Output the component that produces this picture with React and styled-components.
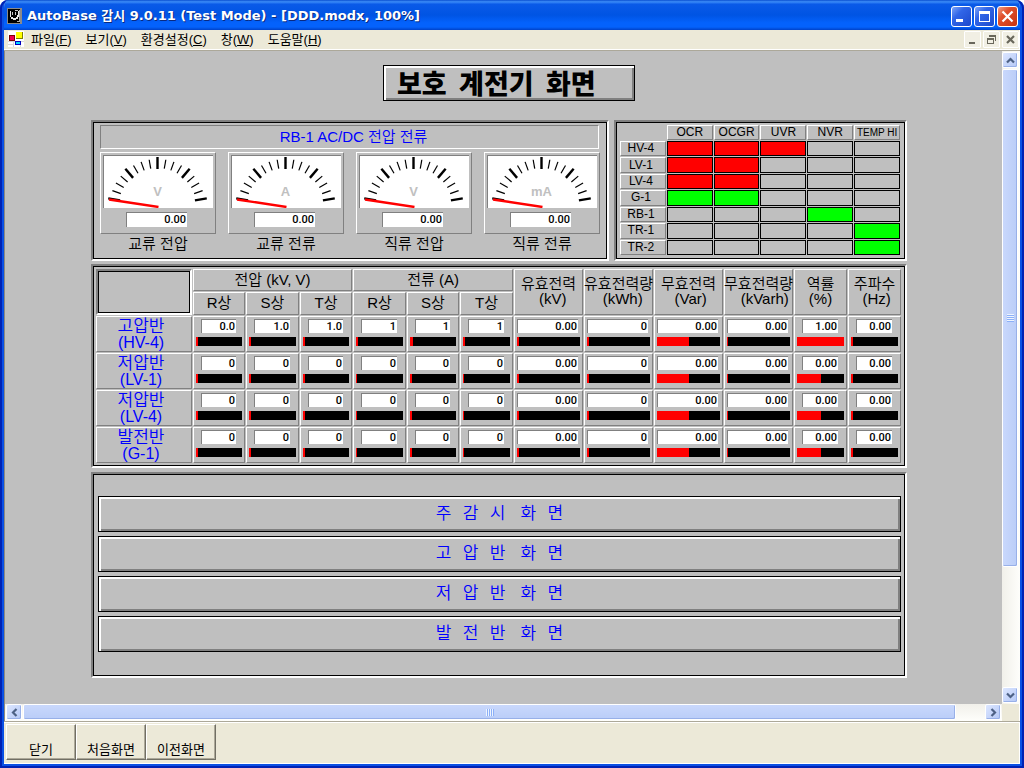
// App.jsx - relay protection monitoring screen inside its desktop window
import styled, { createGlobalStyle, css } from 'styled-components';

const GlobalStyle = createGlobalStyle`
  *, *::before, *::after {
    box-sizing: border-box;
  }

  body {
    margin: 0;
    background: #fff;
    color: #000;
    font-family: 'Liberation Sans', 'Noto Sans CJK KR', sans-serif;
    font-size: 13px;
  }

  button {
    margin: 0;
    padding: 0;
    font: inherit;
    color: inherit;
  }
`;

// Shared bevels
const raised = css`
  border: 1px solid;
  border-color: #fff #808080 #808080 #fff;
`;

const sunken = css`
  border: 1px solid;
  border-color: #808080 #fff #fff #808080;
`;

const groove = css`
  border: 2px solid;
  border-color: #808080 #fff #fff #808080;
  box-shadow: inset 0 0 0 1px #000;
`;

const plate = css`
  border: 1px solid #000;
  background: #bfbfbf;
  box-shadow: inset 2px 2px #fff, inset -2px -2px #808080;
`;

// Window frame
const Window = styled.div`
  display: flex;
  flex-direction: column;
  min-height: 100vh;
  background: #ece9d8;
  border: solid #0a50e4;
  border-width: 0 4px 4px;
  border-radius: 8px 8px 0 0;
  box-shadow: inset 0 -1px #fff, inset -1px 0 #fff;
  outline: 2px solid #0022b4;
  outline-offset: -2px;
  overflow: hidden;
`;

const TitleBar = styled.header`
  display: flex;
  align-items: center;
  gap: 5px;
  height: 30px;
  margin: 0 -4px;
  padding: 2px 6px 0 7px;
  position: relative;
  background: linear-gradient(#0a4fd0 0%, #3c8cf8 6%, #0a5ae8 14%, #0054e3 50%, #0462fc 76%, #0462fc 90%, #0042c8 100%);
`;

const WindowTitle = styled.h1`
  flex: 1;
  margin: 0;
  color: #fff;
  font-family: 'DejaVu Sans', 'Noto Sans CJK KR', sans-serif;
  font-size: 13px;
  font-weight: 700;
  line-height: 20px;
  white-space: nowrap;
  text-shadow: 1px 1px #0a2a80;
`;

const WindowButtons = styled.div`
  display: flex;
  gap: 2px;
`;

const WindowButton = styled.button`
  display: grid;
  place-items: center;
  width: 21px;
  height: 21px;
  border: 1px solid #fff;
  border-radius: 3px;
  background: ${({ $close }) =>
    $close
      ? 'linear-gradient(135deg, #f0a088, #e0502c 35%, #c83410)'
      : 'linear-gradient(135deg, #7ea4f8, #3166e8 35%, #1c48cc)'};
`;

const MenuBar = styled.nav`
  display: flex;
  align-items: center;
  height: 21px;
  padding: 0 0 2px 4px;
  border-bottom: 1px solid #aca899;
  box-shadow: inset 0 -1px #fff;
`;

const MenuList = styled.div`
  display: flex;
  flex: 1;
  gap: 14px;
  margin-left: 7px;
`;

const MenuItem = styled.button`
  padding-top: 1px;
  border: 0;
  background: none;
  font-size: 13px;
  line-height: 18px;
  white-space: nowrap;
`;

const MdiButtons = styled.div`
  display: flex;
  gap: 2px;
  padding-right: 1px;
`;

const MdiButton = styled.button`
  display: grid;
  place-items: center;
  width: 17px;
  height: 17px;
  border: 1px solid #fff;
  border-radius: 1px;
  background: #f1efe4;
`;

const Workspace = styled.div`
  display: grid;
  grid-template-columns: minmax(0, 1fr) 18px;
  grid-template-rows: 1fr 17px;
  flex: 1;
  border-left: 1px solid #8c8a80;
`;

const Canvas = styled.main`
  display: flex;
  flex-direction: column;
  gap: 3px;
  padding: 14px 95px 26px 86px;
  background: #bfbfbf;
`;

// Scroll bars
const ScrollBar = styled.div`
  display: flex;
  flex-direction: ${({ $vertical }) => ($vertical ? 'column' : 'row')};
  gap: 1px;
  padding: ${({ $vertical }) => ($vertical ? '1px 2px 1px 0' : '0 1px 1px')};
  background: linear-gradient(${({ $vertical }) => ($vertical ? '90deg' : '180deg')}, #f1f0ea, #fefefb);
`;

const scrollPart = css`
  border: 1px solid #fff;
  border-radius: 2px;
  box-shadow: inset -1px -1px #98b0e8;
`;

const ScrollButton = styled.button`
  ${scrollPart}
  display: grid;
  place-items: center;
  width: 16px;
  height: 16px;
  flex: none;
  background: linear-gradient(135deg, #dce6ff, #b4c8f6);
`;

const ScrollThumb = styled.div`
  ${scrollPart}
  display: grid;
  place-items: center;
  flex: ${({ $share }) => $share} 1 0;
  background: linear-gradient(${({ $vertical }) => ($vertical ? '90deg' : '180deg')}, #c9d8fc, #bacdf8);
`;

const ScrollRest = styled.div`
  flex: ${({ $share }) => $share} 1 0;
`;

const Grip = styled.div`
  width: ${({ $vertical }) => ($vertical ? '7px' : '8px')};
  height: ${({ $vertical }) => ($vertical ? '8px' : '7px')};
  background: repeating-linear-gradient(
    ${({ $vertical }) => ($vertical ? '180deg' : '90deg')},
    #eef4fe 0 1px,
    #8cb0f8 1px 2px
  );
`;

// Screen heading
const HeadingRow = styled.div`
  display: flex;
  justify-content: center;
  padding: 0 0 16px 20px;
`;

const Heading = styled.h2`
  ${plate}
  width: 252px;
  height: 36px;
  margin: 0;
  padding-left: 13px;
  font-family: 'Noto Sans CJK KR', sans-serif;
  font-size: 27px;
  font-weight: 900;
  line-height: 33px;
  white-space: pre;
`;

const TopRow = styled.div`
  display: grid;
  grid-template-columns: minmax(0, 518fr) minmax(0, 293fr);
  gap: 5px;
`;

// Meters
const MeterPanel = styled.section`
  ${groove}
  padding: 3px 8px 0 7px;
  min-height: 141px;
`;

const PanelCaption = styled.h3`
  ${sunken}
  height: 24px;
  margin: 0 0 3px;
  padding-left: 8px;
  color: #00f;
  font-size: 15px;
  font-weight: 350;
  line-height: 22px;
  text-align: center;
`;

const MeterRow = styled.div`
  display: grid;
  grid-template-columns: repeat(4, 1fr);
  gap: 12px;
`;

const Meter = styled.figure`
  margin: 0;
`;

const MeterBody = styled.div`
  ${raised}
  display: flex;
  flex-direction: column;
  gap: 4px;
  height: 82px;
  padding: 2px;
`;

const Dial = styled.div`
  height: 53px;
  border: solid #808080;
  border-width: 1px 0 0 1px;
  background: #fff;

  svg {
    display: block;
  }
`;

const MeterName = styled.figcaption`
  padding-top: 1px;
  font-size: 15px;
  font-weight: 350;
  line-height: 18px;
  text-align: center;
`;

const Reading = styled.output`
  display: block;
  height: ${({ $tall }) => ($tall ? '15px' : '14px')};
  margin: ${({ $inset }) => $inset};
  padding-right: 1px;
  border: solid #808080;
  border-width: 1px 0 0 1px;
  background: #fff;
  font-family: Roboto, 'Liberation Sans', sans-serif;
  font-size: 11px;
  font-weight: 500;
  line-height: 13px;
  text-align: right;
`;

// Relay states
const RelayPanel = styled.section`
  ${groove}
  padding: 2px 4px 0 3px;
`;

const RelayTable = styled.table`
  width: 100%;
  height: 132px;
  table-layout: fixed;
  border-collapse: separate;
  border-spacing: 1px;

  th {
    ${raised}
    height: 15px;
    padding: 0 4px 0 0;
    font-size: 12px;
    font-weight: 350;
    line-height: 13px;
    white-space: nowrap;
  }

  thead th {
    padding: 0;
  }
`;

const SmallLabel = styled.span`
  font-size: 10px;
`;

const relayColors = { alarm: '#f00', ok: '#0f0', off: 'transparent' };

const RelayCell = styled.td`
  height: 15px;
  padding: 0;
  border: 1px solid #000;
  background: ${({ $state }) => relayColors[$state]};
`;

// Feeder measurements
const FeederPanel = styled.section`
  ${groove}
  padding: 2px 3px 2px 2px;
`;

const FeederTable = styled.table`
  width: 100%;
  table-layout: fixed;
  border-collapse: separate;
  border-spacing: 1px;
`;

const HeadCell = styled.th`
  ${raised}
  height: ${({ $low }) => ($low ? '23px' : '22px')};
  padding: 0 0 2px;
  font-size: 15px;
  font-weight: 350;
  line-height: 15px;
  white-space: pre;

  span {
    display: flex;
    justify-content: center;
  }
`;

const CornerCell = styled.th`
  ${groove}
  padding: 0;
`;

const FeederName = styled.th`
  ${raised}
  padding: 2px 6px 0 0;
  color: #00f;
  font-size: 17px;
  font-weight: 350;
  line-height: 16px;
`;

const FeederCode = styled.span`
  display: block;
  font-size: 16px;
`;

const ValueCell = styled.td`
  ${raised}
  height: 35px;
  padding: 2px 2px 5px;
`;

const Bar = styled.div`
  height: 9px;
  margin-top: 4px;
  background: #000;
`;

const BarFill = styled.div`
  height: 100%;
  background: #f00;
`;

// Screen links
const ScreenPanel = styled.nav`
  ${groove}
  display: flex;
  flex-direction: column;
  gap: 4px;
  min-height: 206px;
  padding: 22px 4px 22px 5px;
  margin-top: 1px;
`;

const ScreenButton = styled.button`
  ${plate}
  height: 36px;
  padding-bottom: 5px;
  color: #00f;
  font-family: 'Noto Sans CJK KR', sans-serif;
  font-size: 17px;
  font-weight: 350;
  white-space: pre;
`;

// Bottom tool bar
const ToolBar = styled.footer`
  display: flex;
  height: 43px;
  padding: 2px 0 0 2px;
  border-top: 1px solid #aca899;
  box-shadow: inset 0 1px #fff;
`;

const ToolButton = styled.button`
  width: 70px;
  height: 36px;
  padding-top: 16px;
  border: 1px solid;
  border-color: #fff #716f64 #716f64 #fff;
  background: #ece9d8;
  box-shadow: inset -1px -1px #aca899;
  font-size: 13px;
  line-height: 16px;
`;

const menus = [
  ['파일', 'F'],
  ['보기', 'V'],
  ['환경설정', 'C'],
  ['창', 'W'],
  ['도움말', 'H'],
];

const meters = [
  { name: '교류 전압', unit: 'V' },
  { name: '교류 전류', unit: 'A' },
  { name: '직류 전압', unit: 'V' },
  { name: '직류 전류', unit: 'mA' },
];

const relayColumns = ['OCR', 'OCGR', 'UVR', 'NVR', 'TEMP HI'];

const relays = [
  { name: 'HV-4', states: ['alarm', 'alarm', 'alarm', 'off', 'off'] },
  { name: 'LV-1', states: ['alarm', 'alarm', 'off', 'off', 'off'] },
  { name: 'LV-4', states: ['alarm', 'alarm', 'off', 'off', 'off'] },
  { name: 'G-1', states: ['ok', 'ok', 'off', 'off', 'off'] },
  { name: 'RB-1', states: ['off', 'off', 'off', 'ok', 'off'] },
  { name: 'TR-1', states: ['off', 'off', 'off', 'off', 'ok'] },
  { name: 'TR-2', states: ['off', 'off', 'off', 'off', 'ok'] },
];

const columnWidths = [96, 52, 53, 52, 53, 52, 53, 69, 69, 69, 69, 53, 53];

const quantities = [
  ['유효전력', '  (kV)'],
  ['유효전력량', '  (kWh)'],
  ['무효전력', ' (Var)'],
  ['무효전력량', '   (kVarh)'],
  ['역률', '(%)'],
  ['주파수', ' (Hz)'],
];

const idleValues = ['0', '0', '0', '0', '0', '0', '0.00', '0', '0.00', '0.00', '0.00', '0.00'];
const idleLevels = [4, 4, 4, 2, 4, 2, 3, 3, 51, 1, 50, 4];

const feeders = [
  {
    name: '고압반',
    code: '(HV-4)',
    values: ['0.0', '1.0', '1.0', '1', '1', '1', '0.00', '0', '0.00', '0.00', '1.00', '0.00'],
    levels: [4, 4, 4, 4, 7, 4, 3, 3, 51, 1, 100, 4],
  },
  { name: '저압반', code: '(LV-1)', values: idleValues, levels: idleLevels },
  { name: '저압반', code: '(LV-4)', values: idleValues, levels: idleLevels },
  { name: '발전반', code: '(G-1)', values: idleValues, levels: idleLevels },
];

const screens = [
  '주   감   시    화   면',
  '고   압   반    화   면',
  '저   압   반    화   면',
  '발   전   반    화   면',
];

const tools = ['닫기', '처음화면', '이전화면'];

const tickAngles = Array.from({ length: 17 }, (_, i) => -80 + i * 10);

function DialFace({ unit }) {
  return (
    <svg width="109" height="52" viewBox="0 0 109 52" aria-hidden="true">
      {tickAngles.map((angle) => {
        const major = angle % 40 === 0;
        return (
          <line
            key={angle}
            x1="53.5"
            x2="53.5"
            y1={major ? 1 : 3}
            y2={major ? 13 : 12}
            stroke="#000"
            strokeWidth={major ? 2.4 : 1.2}
            transform={`rotate(${angle} 53.5 51)`}
          />
        );
      })}
      <text
        x="53.5"
        y="40"
        textAnchor="middle"
        fill="#c0c0c0"
        fontFamily="'Liberation Sans', Arial, sans-serif"
        fontSize="13"
        fontWeight="700"
      >
        {unit}
      </text>
      <line x1="54.5" y1="51" x2="5" y2="43.5" stroke="#f00" strokeWidth="2.4" />
    </svg>
  );
}

function Chevron({ turn = 0 }) {
  return (
    <svg width="9" height="9" viewBox="0 0 9 9" aria-hidden="true">
      <path d="M1 6.5 4.5 3 8 6.5" fill="none" stroke="#4d6185" strokeWidth="2.2" transform={`rotate(${turn} 4.5 4.5)`} />
    </svg>
  );
}

function AppIcon() {
  return (
    <svg width="15" height="16" viewBox="0 0 15 16" aria-hidden="true">
      <rect width="15" height="16" fill="#8a8a8a" />
      <rect x="1" y="1" width="12" height="14" fill="#000" />
      <path d="M2 3h1v6h1v2h2v1h3v-1h2V9h1V3h-1v4h-1v2H9v1H6V9H4V3z" fill="#e8e8e8" />
      <path d="M5 4h1v3H5zM8 2h3v1H8zM8 4h1v3H8z" fill="#c8c8c8" />
      <path d="M12 2h1v12h-3v-1h2z" fill="#b0b0b0" />
    </svg>
  );
}

function DocumentIcon() {
  return (
    <svg width="16" height="16" viewBox="0 0 16 16" aria-hidden="true">
      <rect width="16" height="16" fill="#fff" />
      <path d="M0 10.5h16M5.5 10v6M0 13.5h5M12.5 10v6" stroke="#d8d8d8" />
      <rect x="1" y="4" width="6" height="6" fill="#800000" />
      <rect x="2" y="5" width="4" height="4" fill="#f00050" />
      <rect x="8" y="1" width="7" height="7" fill="#808000" />
      <rect x="8" y="1" width="6" height="6" fill="#ff0" />
      <rect x="7" y="10" width="6" height="4" fill="#0000c0" />
      <rect x="8" y="11" width="4" height="2" fill="#00d8ff" />
    </svg>
  );
}

function TitleArea() {
  return (
    <TitleBar>
      <AppIcon />
      <WindowTitle>AutoBase 감시 9.0.11 (Test Mode) - [DDD.modx, 100%]</WindowTitle>
      <WindowButtons>
        <WindowButton type="button" aria-label="최소화">
          <svg width="13" height="13" viewBox="0 0 13 13">
            <path d="M1 9h7v3H1z" fill="#fff" />
          </svg>
        </WindowButton>
        <WindowButton type="button" aria-label="최대화">
          <svg width="13" height="13" viewBox="0 0 13 13">
            <path d="M1 1h11v11H1zM2 4v7h9V4z" fill="#fff" fillRule="evenodd" />
          </svg>
        </WindowButton>
        <WindowButton type="button" aria-label="닫기" $close>
          <svg width="13" height="13" viewBox="0 0 13 13">
            <path d="m1.5 1.5 10 10m0-10-10 10" stroke="#fff" strokeWidth="2.2" />
          </svg>
        </WindowButton>
      </WindowButtons>
    </TitleBar>
  );
}

function Menus() {
  return (
    <MenuBar>
      <DocumentIcon />
      <MenuList>
        {menus.map(([label, key]) => (
          <MenuItem key={key} type="button">
            {label}(<u>{key}</u>)
          </MenuItem>
        ))}
      </MenuList>
      <MdiButtons>
        <MdiButton type="button" aria-label="창 최소화">
          <svg width="11" height="11" viewBox="0 0 11 11">
            <path d="M2 8h6v2H2z" fill="#69675c" />
          </svg>
        </MdiButton>
        <MdiButton type="button" aria-label="창 복원">
          <svg width="11" height="11" viewBox="0 0 11 11">
            <path d="M3 1h7v6H9V3H3zM1 4h7v6H1zM2 6v3h5V6z" fill="#69675c" fillRule="evenodd" />
          </svg>
        </MdiButton>
        <MdiButton type="button" aria-label="창 닫기">
          <svg width="11" height="11" viewBox="0 0 11 11">
            <path d="m2 2 7 7m0-7-7 7" stroke="#69675c" strokeWidth="2.2" />
          </svg>
        </MdiButton>
      </MdiButtons>
    </MenuBar>
  );
}

function Meters() {
  return (
    <MeterPanel>
      <PanelCaption>RB-1 AC/DC 전압 전류</PanelCaption>
      <MeterRow>
        {meters.map(({ name, unit }) => (
          <Meter key={name}>
            <MeterBody>
              <Dial>
                <DialFace unit={unit} />
              </Dial>
              <Reading $tall $inset="0 26px 0 23px">0.00</Reading>
            </MeterBody>
            <MeterName>{name}</MeterName>
          </Meter>
        ))}
      </MeterRow>
    </MeterPanel>
  );
}

function Relays() {
  return (
    <RelayPanel>
      <RelayTable>
        <thead>
          <tr>
            <td />
            {relayColumns.map((name) => (
              <th key={name} scope="col">
                {name.length > 4 ? <SmallLabel>{name}</SmallLabel> : name}
              </th>
            ))}
          </tr>
        </thead>
        <tbody>
          {relays.map(({ name, states }) => (
            <tr key={name}>
              <th scope="row">{name}</th>
              {states.map((state, i) => (
                <RelayCell key={relayColumns[i]} $state={state} />
              ))}
            </tr>
          ))}
        </tbody>
      </RelayTable>
    </RelayPanel>
  );
}

function Feeders() {
  return (
    <FeederPanel>
      <FeederTable>
        <colgroup>
          {columnWidths.map((width, i) => (
            <col key={i} width={width} />
          ))}
        </colgroup>
        <thead>
          <tr>
            <CornerCell rowSpan={2} />
            <HeadCell colSpan={3}>전압 (kV, V)</HeadCell>
            <HeadCell colSpan={3}>전류 (A)</HeadCell>
            {quantities.map(([name, unit]) => (
              <HeadCell key={name} rowSpan={2}>
                <span>{name}</span>
                <span>{unit}</span>
              </HeadCell>
            ))}
          </tr>
          <tr>
            {['R상', 'S상', 'T상', 'R상', 'S상', 'T상'].map((phase, i) => (
              <HeadCell key={i} $low>
                {phase}
              </HeadCell>
            ))}
          </tr>
        </thead>
        <tbody>
          {feeders.map(({ name, code, values, levels }) => (
            <tr key={code}>
              <FeederName scope="row">
                {name}
                <FeederCode>{code}</FeederCode>
              </FeederName>
              {values.map((value, i) => (
                <ValueCell key={i}>
                  <Reading $inset={i > 5 && i < 10 ? '0 2px 0 0' : '0 6px 0 5px'}>{value}</Reading>
                  <Bar>
                    <BarFill style={{ width: `${levels[i]}%` }} />
                  </Bar>
                </ValueCell>
              ))}
            </tr>
          ))}
        </tbody>
      </FeederTable>
    </FeederPanel>
  );
}

function App() {
  return (
    <>
      <GlobalStyle />
      <Window>
        <TitleArea />
        <Menus />
        <Workspace>
          <Canvas>
            <HeadingRow>
              <Heading>보호  계전기  화면</Heading>
            </HeadingRow>
            <TopRow>
              <Meters />
              <Relays />
            </TopRow>
            <Feeders />
            <ScreenPanel>
              {screens.map((label) => (
                <ScreenButton key={label} type="button">
                  {label}
                </ScreenButton>
              ))}
            </ScreenPanel>
          </Canvas>
          <ScrollBar $vertical>
            <ScrollButton type="button" aria-label="위로">
              <Chevron />
            </ScrollButton>
            <ScrollThumb $vertical $share={499}>
              <Grip $vertical />
            </ScrollThumb>
            <ScrollRest $share={119} />
            <ScrollButton type="button" aria-label="아래로">
              <Chevron turn={180} />
            </ScrollButton>
          </ScrollBar>
          <ScrollBar>
            <ScrollButton type="button" aria-label="왼쪽으로">
              <Chevron turn={-90} />
            </ScrollButton>
            <ScrollThumb $share={934}>
              <Grip />
            </ScrollThumb>
            <ScrollRest $share={27} />
            <ScrollButton type="button" aria-label="오른쪽으로">
              <Chevron turn={90} />
            </ScrollButton>
          </ScrollBar>
        </Workspace>
        <ToolBar>
          {tools.map((label) => (
            <ToolButton key={label} type="button">
              {label}
            </ToolButton>
          ))}
        </ToolBar>
      </Window>
    </>
  );
}

export default App;
